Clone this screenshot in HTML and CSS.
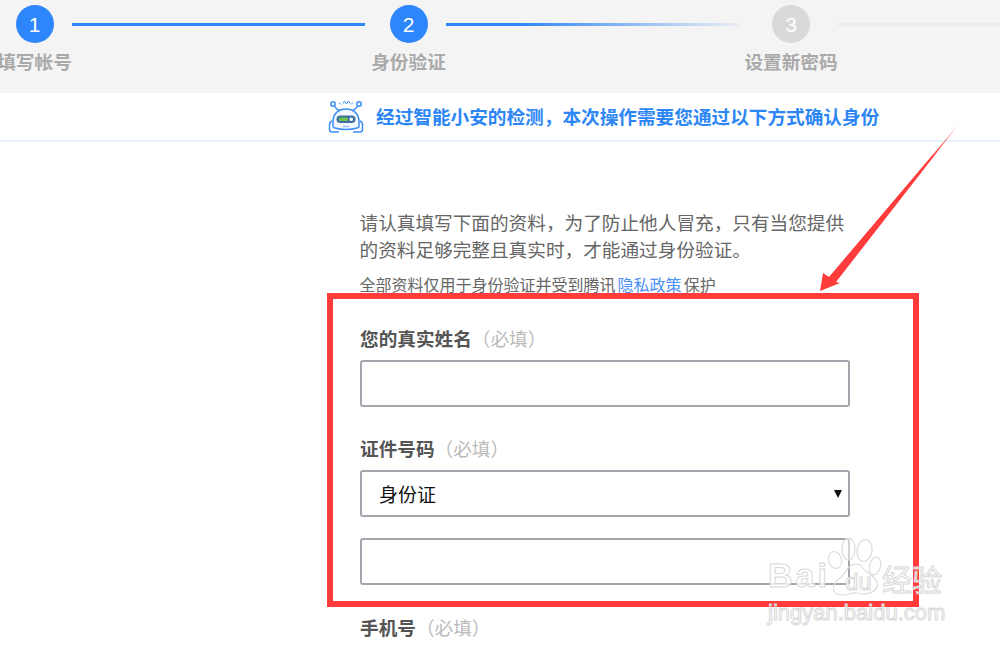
FILE: index.html
```html
<!DOCTYPE html>
<html lang="zh-CN">
<head>
<meta charset="utf-8">
<title>身份验证</title>
<link rel="stylesheet" href="styles.css">
</head>
<body>
<div class="page">
  <header class="steps">
    <div class="step first"><span class="dot on">1</span><span class="step-name">填写帐号</span></div>
    <span class="line blue l1"></span>
    <div class="step"><span class="dot on">2</span><span class="step-name">身份验证</span></div>
    <span class="line fade l2"></span>
    <div class="step third"><span class="dot off">3</span><span class="step-name">设置新密码</span></div>
    <span class="line grey l3"></span>
  </header>
  <div class="notice">
    <svg class="robot" width="36" height="36" viewBox="0 0 36 36" fill="none">
      <g stroke="#3d8ff5" stroke-width="1.5">
        <circle cx="5" cy="6" r="2.2"/><circle cx="31" cy="6" r="2.2"/>
        <path d="M6.5 8 Q8 11 11 12.5M29.5 8 Q28 11 25 12.5" />
        <path d="M11 4.5l2 2M15 5.5l1.5-2.5 2 3 2-3 1.5 2.5M25 4.5l-2 2" stroke-width="1"/>
        <path d="M5 24 C5 15 11 11 18 11 C25 11 31 15 31 24 V28 Q31 30 29 30 C23 32 13 32 7 30 Q5 30 5 28 Z" fill="#f3f8ff"/>
        <path d="M4 23 Q1.5 24 1.5 27 V31 Q1.5 34 4 34 H11 M32 23 Q34.500 24 34.500 27 V31 Q34.500 34 32 34 H25" />
      </g>
      <rect x="8.500" y="17.500" width="19" height="7.500" rx="3.750" fill="#3d6f9f"/>
      <rect x="11" y="19.500" width="9" height="3.500" rx="1" fill="#6fc04a"/>
      <rect x="21.500" y="19.500" width="3.500" height="3.500" rx="1.500" fill="#e8f3ff"/>
      <path d="M15 28.500h6" stroke="#9cc4f7" stroke-width="1.500"/>
    </svg>
    <span class="notice-text">经过智能小安的检测，本次操作需要您通过以下方式确认身份</span>
  </div>
  <main class="form">
    <p class="intro">请认真填写下面的资料，为了防止他人冒充，只有当您提供的资料足够完整且真实时，才能通过身份验证。</p>
    <p class="note">全部资料仅用于身份验证并受到腾讯 <a class="link" href="#">隐私政策</a> 保护</p>
    <div class="field">
      <label class="field-label">您的真实姓名<span class="req">（必填）</span></label>
      <input class="box" type="text">
    </div>
    <div class="field id-field">
      <label class="field-label">证件号码<span class="req">（必填）</span></label>
      <div class="select-wrap"><select class="box select"><option>身份证</option></select></div>
      <input class="box second" type="text">
    </div>
    <div class="field">
      <label class="field-label">手机号<span class="req">（必填）</span></label>
    </div>
  </main>
  <div class="red-box"></div>
  <svg class="arrow" width="170" height="190" viewBox="0 0 170 190">
    <defs>
      <linearGradient id="tail" x1="1" y1="0" x2="0" y2="1">
        <stop offset="0" stop-color="#ff3b3b" stop-opacity="0"/>
        <stop offset="0.22" stop-color="#ff3b3b"/>
        <stop offset="1" stop-color="#ff3b3b"/>
      </linearGradient>
    </defs>
    <polygon points="20,181 23,163 29,167 163,9 36,172 40,173" fill="url(#tail)"/>
  </svg>
  <div class="mark">
    <svg class="paw" width="60" height="60" viewBox="0 0 60 60" fill="rgba(255,255,255,.5)" stroke="#dcdcdc" stroke-width="1.200">
      <ellipse cx="10" cy="22" rx="6.500" ry="8.500" transform="rotate(-15 10 22)"/>
      <ellipse cx="23.500" cy="11" rx="6.500" ry="11"/>
      <ellipse cx="39.500" cy="12.500" rx="7.500" ry="11" transform="rotate(8 39.500 12.500)"/>
      <ellipse cx="50" cy="28" rx="5.500" ry="9" transform="rotate(15 50 28)"/>
      <path d="M30 26 C23 26 22 35 14 41 C6 47 6 57 18 57 C24 57 27 54 32 55 C42 58 54 54 52 44 C50 37 42 36 38 30 C36 27 33 26 30 26 Z" fill="none"/>
    </svg>
    <span class="mark-bai">Bai</span>
    <span class="mark-du">du</span>
    <span class="mark-cn">经验</span>
    <span class="mark-url">jingyan.baidu.com</span>
  </div>
</div>
</body>
</html>
```
FILE: styles.css
```css
* { box-sizing: border-box; }
html, body { margin: 0; padding: 0; background: #fff; }
body { font-family: "Noto Sans CJK SC", "Noto Sans", sans-serif; }
.page { position: relative; width: 1000px; height: 645px; overflow: hidden; }

.steps { display: flex; align-items: flex-start; height: 93px; padding: 5px 0 0 15.500px; background: #f4f4f4; }
.step { display: flex; flex-direction: column; align-items: center; width: 38px; flex: none; }
.dot { display: flex; align-items: center; justify-content: center; width: 38px; height: 38px; border-radius: 50%; color: #fff; font-size: 21px; line-height: 1; font-family: "Liberation Sans", sans-serif; flex: none; }
.dot.on { background: #2d86fb; }
.dot.off { background: #d9d9d9; }
.step-name { margin-top: 4px; font-size: 18.650px; line-height: 28px; font-weight: 700; color: #aaa; white-space: nowrap; }
.line { flex: none; height: 3px; margin-top: 18px; }
.blue { background: #2d86fb; }
.l1 { width: 293px; margin-left: 18.500px; margin-right: 24.500px; }
.fade { background: linear-gradient(90deg, #2d86fb 0%, #2d86fb 25%, #ebeef2 100%); }
.l2 { width: 293px; margin-left: 18.500px; margin-right: 33px; }
.grey { background: #ececec; }
.l3 { width: 162px; margin-left: 28px; }

.notice { display: flex; align-items: center; gap: 12px; height: 49px; padding: 0 0 2px 328px; border-bottom: 2px solid #e6f1fe; }
.robot { flex: none; }
.notice-text { font-size: 18.650px; line-height: 26px; font-weight: 700; color: #2d86f5; white-space: nowrap; }

.form { width: 490px; margin-left: 360px; padding-top: 66px; }
.intro { margin: 0 0 0 -0.500px; font-size: 18.650px; line-height: 27px; color: #666; }
.note { margin: 10px 0 0 -0.500px; font-size: 16px; line-height: 24px; color: #666; white-space: nowrap; word-spacing: -1.500px; }
.link { color: #4a90f5; text-decoration: none; }
.field { margin-top: 28px; }
.id-field { margin-top: 27px; }
.field-label { display: block; height: 28px; margin-bottom: 8px; font-size: 18.650px; line-height: 28px; font-weight: 700; color: #555; white-space: nowrap; }
.req { font-weight: 400; color: #bbb; }
.box { display: block; width: 490px; height: 47px; padding: 0 17px; border: 2px solid #a3a7ad; border-radius: 3px; background: #fff; font-family: inherit; font-size: 19px; color: #111; outline: none; }
.select { appearance: none; -webkit-appearance: none; }
.select-wrap { position: relative; }
.select-wrap::after { content: ""; position: absolute; right: 8px; top: 20px; border-left: 4.500px solid transparent; border-right: 4.500px solid transparent; border-top: 8px solid #111; }
.second { margin-top: 21px; }

.red-box { position: absolute; left: 327px; top: 293px; width: 592px; height: 314px; border: 6px solid #ff3b3b; }
.arrow { position: absolute; left: 800px; top: 110px; }

.mark { position: absolute; left: 760px; top: 535px; width: 195px; height: 95px; pointer-events: none; }
.paw { position: absolute; left: 65px; top: 3px; }
.mark-bai, .mark-du, .mark-cn, .mark-url { position: absolute; font-family: "Liberation Sans", sans-serif; color: rgba(255,255,255,.8); -webkit-text-stroke: 1px #d8d8d8; white-space: nowrap; line-height: 1; }
.mark-bai { left: 8px; top: 23px; font-size: 34px; font-weight: 700; letter-spacing: 3px; }
.mark-du { left: 85px; top: 35px; font-size: 24px; }
.mark-cn { left: 122px; top: 28px; font-size: 30px; font-family: "Noto Sans CJK SC", sans-serif; }
.mark-url { left: 8px; top: 67px; font-size: 22px; }
```
